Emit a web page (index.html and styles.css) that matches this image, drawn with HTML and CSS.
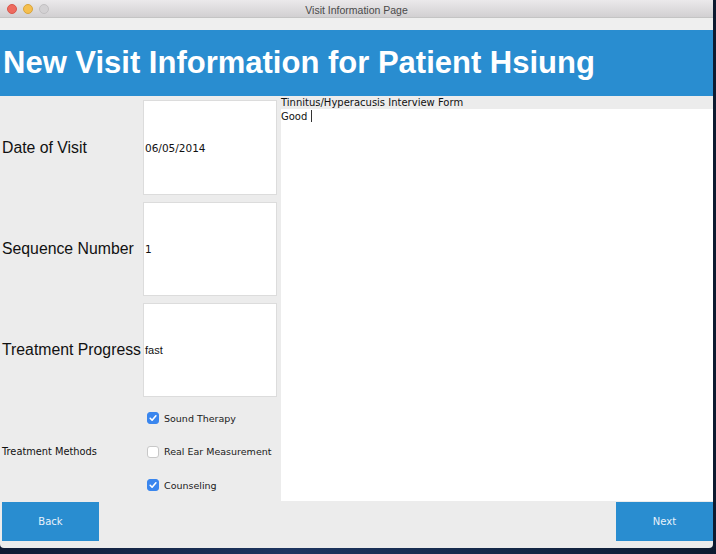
FILE: index.html
```html
<!DOCTYPE html>
<html>
<head>
<meta charset="utf-8">
<link rel="stylesheet" href="styles.css">
</head>
<body>
<div class="window">
  <div class="titlebar">
    <div class="lights">
      <span class="light red"></span>
      <span class="light yellow"></span>
      <span class="light grey"></span>
    </div>
    <div class="title">Visit Information Page</div>
  </div>
  <div class="strip"></div>
  <div class="header">New Visit Information for Patient Hsiung</div>
  <div class="content">
    <div class="left">
      <div class="row first">
        <div class="label">Date of Visit</div>
        <div class="field mono">06/05/2014</div>
      </div>
      <div class="row">
        <div class="label">Sequence Number</div>
        <div class="field mono">1</div>
      </div>
      <div class="row">
        <div class="label">Treatment Progress</div>
        <div class="field sans">fast</div>
      </div>
      <div class="methods">
        <div class="small-label">Treatment Methods</div>
        <div class="checks">
          <div class="check"><span class="box on"><svg viewBox="0 0 12 12" width="12" height="12"><path d="M3.2 6.3 L5.1 8.2 L8.9 3.8" fill="none" stroke="#fff" stroke-width="1.6" stroke-linecap="round" stroke-linejoin="round"/></svg></span>Sound Therapy</div>
          <div class="check"><span class="box"></span>Real Ear Measurement</div>
          <div class="check"><span class="box on"><svg viewBox="0 0 12 12" width="12" height="12"><path d="M3.2 6.3 L5.1 8.2 L8.9 3.8" fill="none" stroke="#fff" stroke-width="1.6" stroke-linecap="round" stroke-linejoin="round"/></svg></span>Counseling</div>
        </div>
      </div>
    </div>
    <div class="right">
      <div class="form-title">Tinnitus/Hyperacusis Interview Form</div>
      <div class="textarea">Good <span class="caret"></span></div>
    </div>
  </div>
  <div class="footer">
    <div class="btn">Back</div>
    <div class="btn">Next</div>
  </div>
</div>
</body>
</html>
```
FILE: styles.css
```css
html, body {
  margin: 0;
  padding: 0;
}
body {
  width: 716px;
  height: 554px;
  background: linear-gradient(90deg, #0e1a33 0%, #1d3560 40%, #142848 70%, #0d1a30 100%);
  overflow: hidden;
  font-family: "Liberation Sans", Arial, sans-serif;
}
.window {
  width: 713px;
  height: 548px;
  background: #ececec;
  display: flex;
  flex-direction: column;
  border-radius: 0 0 4px 4px;
  overflow: hidden;
}
.titlebar {
  height: 18px;
  flex: none;
  background: linear-gradient(#ebe9eb, #d2d0d2);
  border-bottom: 1px solid #c4c4c4;
  box-sizing: border-box;
  display: flex;
  align-items: center;
  position: relative;
}
.lights {
  display: flex;
  gap: 6px;
  padding-left: 7px;
  padding-top: 1px;
}
.light {
  width: 10px;
  height: 10px;
  border-radius: 50%;
  display: block;
}
.red { background: #ee6a5f; border: 0.5px solid #d8574c; box-sizing: border-box; }
.yellow { background: #f5bf4f; border: 0.5px solid #d9a43a; box-sizing: border-box; }
.grey { background: #d3d1d3; border: 0.5px solid #c2c0c2; box-sizing: border-box; }
.title {
  position: absolute;
  left: 0;
  right: 0;
  top: 1px;
  bottom: 0;
  text-align: center;
  line-height: 18px;
  font-size: 10.5px;
  color: #4a4a4a;
}
.strip {
  height: 12px;
  flex: none;
  background: #efefef;
}
.header {
  height: 66px;
  flex: none;
  background: #298dd0;
  color: #fff;
  font-weight: bold;
  font-size: 31px;
  line-height: 66px;
  padding-left: 3px;
  white-space: nowrap;
}
.content {
  height: 406px;
  flex: none;
  display: flex;
}
.left {
  width: 277px;
  flex: none;
  display: flex;
  flex-direction: column;
  padding-top: 4px;
  gap: 7px;
  box-sizing: border-box;
}
.row {
  display: flex;
  height: 94px;
  flex: none;
}
.row.first {
  height: 95px;
}
.label {
  width: 143px;
  flex: none;
  display: flex;
  align-items: center;
  padding-left: 2px;
  box-sizing: border-box;
  font-size: 15.8px;
  color: #111;
  white-space: nowrap;
}
.field {
  flex: 1;
  background: #fff;
  border: 1px solid #dcdcdc;
  display: flex;
  align-items: center;
  font-size: 10px;
  color: #111;
  padding-left: 1px;
}
.mono {
  font-family: "DejaVu Sans", sans-serif;
  font-size: 10.5px;
}
.sans {
  font-family: "Liberation Sans", Arial, sans-serif;
  font-size: 11px;
}
.methods {
  display: flex;
  align-items: center;
  margin-top: -7px;
}
.small-label {
  width: 143px;
  flex: none;
  padding-left: 2px;
  box-sizing: border-box;
  font-family: "DejaVu Sans", sans-serif;
  font-size: 9.8px;
  color: #111;
}
.checks {
  display: flex;
  flex-direction: column;
  gap: 21.5px;
  padding: 15px 0;
}
.check {
  display: flex;
  align-items: center;
  gap: 5px;
  height: 12px;
  padding-left: 4px;
  font-family: "DejaVu Sans", sans-serif;
  font-size: 9.5px;
  color: #1a1a1a;
}
.box {
  width: 12px;
  height: 12px;
  border-radius: 3px;
  background: #fff;
  border: 1px solid #c8c8c8;
  box-sizing: border-box;
  display: block;
  flex: none;
}
.box.on {
  background: #3a86ee;
  border-color: #3a86ee;
  display: flex;
  align-items: center;
  justify-content: center;
}
.box.on svg {
  flex: none;
}
.right {
  flex: 1;
  display: flex;
  flex-direction: column;
  padding-left: 4px;
}
.form-title {
  height: 13px;
  font-family: "DejaVu Sans", sans-serif;
  font-size: 10px;
  line-height: 13px;
  color: #111;
}
.textarea {
  flex: 1;
  background: #fff;
  font-family: "DejaVu Sans", sans-serif;
  font-size: 10px;
  line-height: 15px;
  color: #111;
  margin-bottom: 1px;
}
.caret {
  display: inline-block;
  width: 1px;
  height: 12px;
  background: #333;
  vertical-align: -2px;
}
.footer {
  display: flex;
  justify-content: space-between;
  padding: 0 0 0 2px;
  height: 39px;
  flex: none;
}
.btn {
  width: 97px;
  background: #298dd0;
  color: #e8f2fb;
  font-family: "DejaVu Sans", sans-serif;
  font-size: 10px;
  display: flex;
  align-items: center;
  justify-content: center;
}
```
